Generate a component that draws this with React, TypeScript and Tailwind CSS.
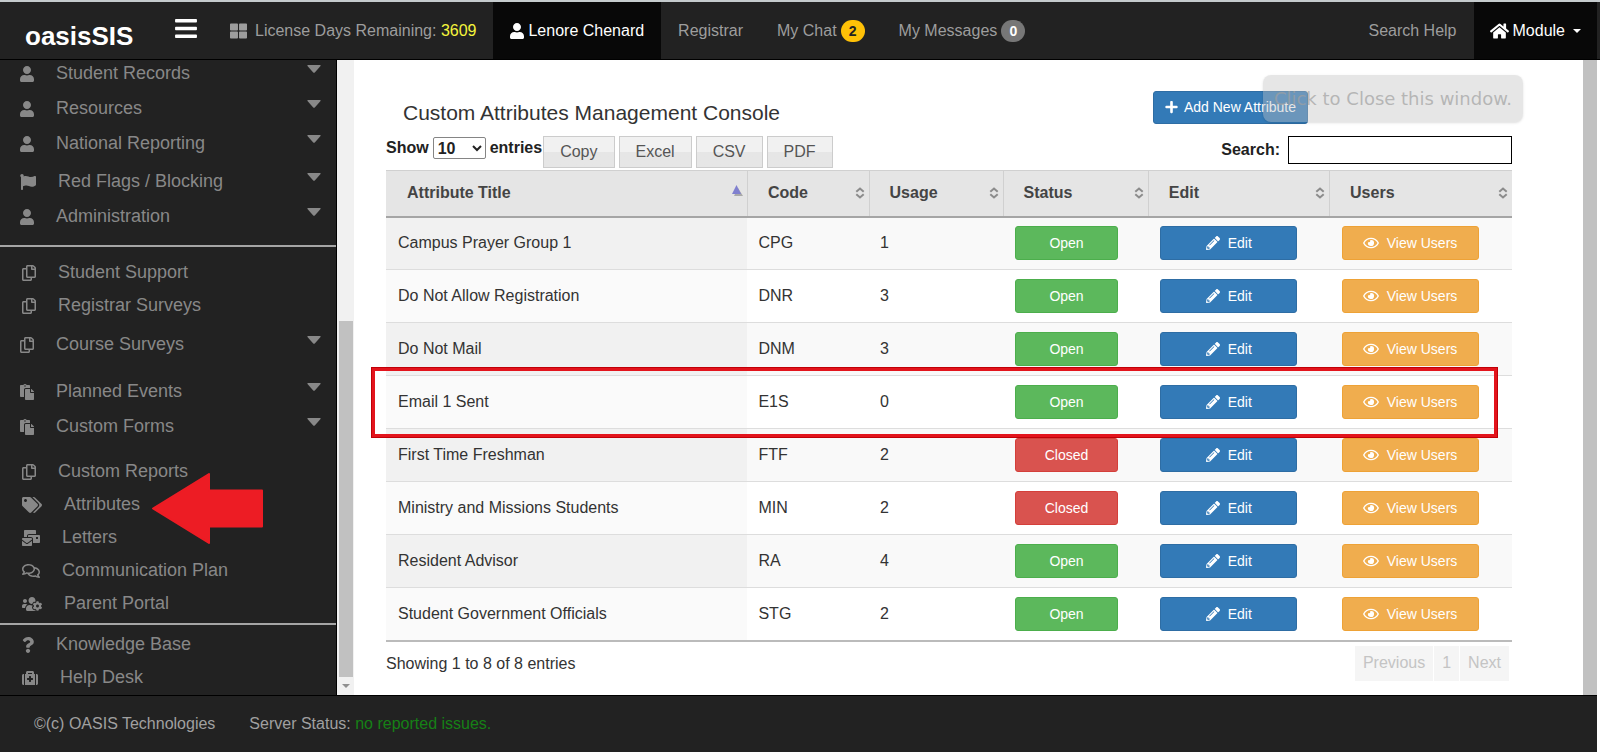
import type { ComponentType } from "react";
import {
  FaBars,
  FaFlag,
  FaHome,
  FaMailBulk,
  FaMedkit,
  FaPaste,
  FaPencilAlt,
  FaPlus,
  FaQuestion,
  FaRegComments,
  FaRegCopy,
  FaRegEye,
  FaTags,
  FaThLarge,
  FaUser,
  FaUsersCog,
} from "react-icons/fa";

type Icon = ComponentType<{ className?: string }>;

type MenuItem = { label: string; icon: Icon; size: string; menu?: boolean; pointer?: boolean };

const menuGroups: { className: string; items: MenuItem[] }[] = [
  {
    className: "gap-2",
    items: [
      { label: "Student Records", icon: FaUser, size: "w-[14px]", menu: true },
      { label: "Resources", icon: FaUser, size: "w-[14px]", menu: true },
      { label: "National Reporting", icon: FaUser, size: "w-[14px]", menu: true },
    ],
  },
  {
    className: "gap-2 pt-[11px] pb-[15px]",
    items: [
      { label: "Red Flags / Blocking", icon: FaFlag, size: "w-4", menu: true },
      { label: "Administration", icon: FaUser, size: "w-[14px]", menu: true },
    ],
  },
  {
    className: "gap-[6px] border-t-2 border-[#a5a5a5] pt-3",
    items: [
      { label: "Student Support", icon: FaRegCopy, size: "w-[14px]" },
      { label: "Registrar Surveys", icon: FaRegCopy, size: "w-[14px]" },
    ],
  },
  {
    className: "pt-3",
    items: [{ label: "Course Surveys", icon: FaRegCopy, size: "w-[14px]", menu: true }],
  },
  {
    className: "gap-2 pt-5",
    items: [
      { label: "Planned Events", icon: FaPaste, size: "w-[14px]", menu: true },
      { label: "Custom Forms", icon: FaPaste, size: "w-[14px]", menu: true },
    ],
  },
  {
    className: "gap-[6px] pt-[18px] pb-[6px]",
    items: [
      { label: "Custom Reports", icon: FaRegCopy, size: "w-[14px]" },
      { label: "Attributes", icon: FaTags, size: "w-5", pointer: true },
      { label: "Letters", icon: FaMailBulk, size: "w-[18px]" },
      { label: "Communication Plan", icon: FaRegComments, size: "w-[18px]" },
      { label: "Parent Portal", icon: FaUsersCog, size: "w-5" },
    ],
  },
  {
    className: "gap-[6px] border-t-2 border-[#a5a5a5] pt-[6px]",
    items: [
      { label: "Knowledge Base", icon: FaQuestion, size: "w-3" },
      { label: "Help Desk", icon: FaMedkit, size: "w-4" },
    ],
  },
];

const attributes = [
  { title: "Campus Prayer Group 1", code: "CPG", usage: 1, open: true },
  { title: "Do Not Allow Registration", code: "DNR", usage: 3, open: true },
  { title: "Do Not Mail", code: "DNM", usage: 3, open: true },
  { title: "Email 1 Sent", code: "E1S", usage: 0, open: true, marked: true },
  { title: "First Time Freshman", code: "FTF", usage: 2, open: false },
  { title: "Ministry and Missions Students", code: "MIN", usage: 2, open: false },
  { title: "Resident Advisor", code: "RA", usage: 4, open: true },
  { title: "Student Government Officials", code: "STG", usage: 2, open: true },
];

const columns = [
  { label: "Attribute Title", width: "w-[32.1%]", sorted: true },
  { label: "Code", width: "w-[10.8%]" },
  { label: "Usage", width: "w-[11.9%]" },
  { label: "Status", width: "w-[12.9%]" },
  { label: "Edit", width: "w-[16.1%]" },
  { label: "Users", width: "w-[16.2%]" },
];

function SortIcon({ sorted }: { sorted?: boolean }) {
  if (sorted) {
    return (
      <svg className="mb-1 h-3 w-3" viewBox="0 0 12 12">
        <path d="M7 3l5 8H3z" fill="#a9a9a9" />
        <path d="M5.5 0L10 9H1z" fill="#8080cf" />
      </svg>
    );
  }
  return (
    <svg className="h-3 w-[10px]" viewBox="0 0 10 12" fill="none" stroke="#8c8c8c" strokeWidth="2">
      <path d="M1.3 4.8L5 1.5l3.7 3.3M1.3 7.2L5 10.5l3.7-3.3" />
    </svg>
  );
}

function Header() {
  return (
    <header className="flex h-[60px] items-stretch border-t-2 border-b border-t-[#c5cbcd] border-b-black bg-[#222] pr-[3px] text-[#9d9d9d]">
      <a href="#" className="flex w-[149px] items-center pt-3 pl-[25px] text-[26px] font-bold text-white">
        oasisSIS
      </a>
      <button type="button" aria-label="Toggle menu" className="w-[64px] pb-1 pl-[26px] text-white">
        <FaBars className="h-[25px] w-[22px]" />
      </button>
      <div className="flex items-center gap-2 px-[17px]">
        <FaThLarge className="h-[18px] w-[17px]" />
        <span>
          License Days Remaining: <span className="text-[#f5f53c]">3609</span>
        </span>
      </div>
      <a href="#" className="flex items-center gap-1 bg-[#080808] px-[17px] text-white">
        <FaUser className="h-4 w-[14px]" />
        Lenore Chenard
      </a>
      <a href="#" className="flex items-center px-[17px]">
        Registrar
      </a>
      <a href="#" className="flex items-center gap-1 px-[17px]">
        My Chat
        <span className="flex h-[22px] w-6 items-center justify-center rounded-full bg-[#ffc107] text-sm font-bold text-[#222]">
          2
        </span>
      </a>
      <a href="#" className="flex items-center gap-1 px-[17px]">
        My Messages
        <span className="flex h-[22px] w-6 items-center justify-center rounded-full bg-[#777] text-sm font-bold text-white">
          0
        </span>
      </a>
      <a href="#" className="ml-auto flex items-center px-[17px]">
        Search Help
      </a>
      <button type="button" className="flex items-center gap-1 bg-[#080808] px-4 text-white">
        <FaHome className="h-[18px] w-[19px]" />
        Module
        <svg className="ml-1 h-1 w-2" viewBox="0 0 8 4" fill="currentColor">
          <path d="M0 0h8L4 4z" />
        </svg>
      </button>
    </header>
  );
}

function SidebarItem({ item }: { item: MenuItem }) {
  const ItemIcon = item.icon;
  return (
    <li className="relative">
      <a
        href="#"
        className={`flex h-[27px] items-center gap-[22px] pr-[15px] ${item.menu ? "pl-5" : "pl-[22px]"}`}
      >
        <ItemIcon className={`h-4 shrink-0 ${item.size}`} />
        {item.label}
        {item.menu && (
          <svg className="mt-[5px] ml-auto h-2 w-[14px] self-start" viewBox="0 0 14 8" fill="currentColor">
            <path d="M1 0h12q1.2 0 .5 1L8 7.300q-1 1-2 0L.5 1Q-.2 0 1 0z" />
          </svg>
        )}
      </a>
      {item.pointer && (
        <svg
          className="absolute -top-[18px] left-[152px] z-10 h-[71px] w-[111px]"
          viewBox="0 0 111 71"
          fill="#ed1c24"
          stroke="#ed1c24"
          strokeWidth="2"
          strokeLinejoin="round"
        >
          <path d="M1 35.500L57 1v16.500h53v36H57V70z" />
        </svg>
      )}
    </li>
  );
}

function Sidebar() {
  return (
    <aside className="flex w-[354px] shrink-0">
      <nav className="flex-1 border-r border-black bg-[#222] pb-1 text-lg leading-[27px] text-[#888]">
        {menuGroups.map((group, i) => (
          <ul key={i} className={`flex flex-col ${group.className}`}>
            {group.items.map((item) => (
              <SidebarItem key={item.label} item={item} />
            ))}
          </ul>
        ))}
      </nav>
      {/* Scrollbar */}
      <div className="flex w-[17px] flex-col items-center justify-end bg-[#f1f1f1]">
        <div className="h-[56%] w-[14px] bg-[#c1c1c1]" />
        <div className="flex h-[18px] items-center">
          <svg className="h-1 w-2" viewBox="0 0 8 4" fill="#8f8f8f">
            <path d="M0 0h8L4 4z" />
          </svg>
        </div>
      </div>
    </aside>
  );
}

function AttributesTable() {
  return (
    <table className="w-full table-fixed border-collapse border-b-2 border-[#bbb] text-left text-[#333]">
      <thead>
        <tr className="h-[46px] border-t border-b-2 border-t-[#d0d0d0] border-b-[#a5a5a5] bg-[#e5e5e5]">
          {columns.map((col) => (
            <th
              key={col.label}
              className={`border-l border-[#d0d0d0] pr-1 pl-5 text-[#444] first:border-l-0 first:pl-[21px] ${col.width}`}
            >
              <div className="flex items-center justify-between">
                {col.label}
                <SortIcon sorted={col.sorted} />
              </div>
            </th>
          ))}
        </tr>
      </thead>
      <tbody>
        {attributes.map((row) => (
          <tr
            key={row.code}
            className="group relative h-[53px] border-t border-[#ddd] first:border-t-0 odd:bg-[#f9f9f9]"
          >
            <td className="bg-[#fafafa] pl-3 group-odd:bg-[#f1f1f1]">
              {row.title}
              {row.marked && (
                <span className="pointer-events-none absolute -top-[10px] right-[14px] -bottom-[9px] -left-[15px] z-10 border-4 border-[#e3141c] outline -outline-offset-1 outline-[#c00008]" />
              )}
            </td>
            <td className="pl-[11px]">{row.code}</td>
            <td className="pl-[11px]">{row.usage}</td>
            <td className="pl-3">
              <button
                type="button"
                className={`h-[34px] w-[103px] rounded-[3px] border text-sm text-white ${
                  row.open ? "border-[#4cae4c] bg-[#5cb85c]" : "border-[#d43f3a] bg-[#d9534f]"
                }`}
              >
                {row.open ? "Open" : "Closed"}
              </button>
            </td>
            <td className="pl-3">
              <button
                type="button"
                className="flex h-[34px] w-[137px] items-center justify-center gap-2 rounded-[3px] border border-[#2e6da4] bg-[#337ab7] text-sm text-white"
              >
                <FaPencilAlt className="h-[14px] w-[14px]" />
                Edit
              </button>
            </td>
            <td className="pl-3">
              <button
                type="button"
                className="flex h-[34px] w-[137px] items-center justify-center gap-2 rounded-[3px] border border-[#eea236] bg-[#f0ad4e] text-sm text-white"
              >
                <FaRegEye className="h-[14px] w-4" />
                View Users
              </button>
            </td>
          </tr>
        ))}
      </tbody>
    </table>
  );
}

function Console() {
  return (
    <main className="relative flex-1 bg-white pt-[30px] pr-[71px] pl-8">
      <div className="flex items-center justify-between pl-[17px]">
        <h1 className="pt-3 text-[21px] leading-[22px] text-[#333]">Custom Attributes Management Console</h1>
        <button
          type="button"
          className="mr-[204px] flex h-[33px] items-center gap-[6px] rounded-[3px] border border-[#2e6da4] bg-[#337ab7] px-[11px] text-sm text-white"
        >
          <FaPlus className="h-[14px] w-[13px]" />
          Add New Attribute
        </button>
      </div>

      <div className="mt-3 flex h-[34px] items-start text-[#222]">
        <label className="flex items-center gap-1 font-bold">
          Show
          <select className="h-[22px] w-[53px] rounded-[2px] border border-[#858585] bg-white">
            <option>10</option>
          </select>
          entries
        </label>
        <div className="flex gap-1 pl-px">
          {["Copy", "Excel", "CSV", "PDF"].map((name) => (
            <button
              key={name}
              type="button"
              className="h-8 border border-[#ccc] bg-linear-to-b from-[#f1f1f1] from-50% to-[#e6e6e6] to-50% px-4 text-[#555]"
            >
              {name}
            </button>
          ))}
        </div>
        <label className="ml-auto flex items-center gap-2 font-bold">
          Search:
          <input type="search" className="h-7 w-56 border border-black bg-white px-1 font-normal" />
        </label>
      </div>

      <AttributesTable />

      <div className="flex items-start justify-between pt-1 pr-[3px] text-[#333]">
        <p className="pt-[6px]">Showing 1 to 8 of 8 entries</p>
        <div className="flex h-[35px] gap-px text-[#c4c4c4]">
          {["Previous", "1", "Next"].map((page) => (
            <button key={page} type="button" className="bg-[#f5f5f5] px-2" disabled>
              {page}
            </button>
          ))}
        </div>
      </div>

      <button
        type="button"
        className="absolute top-[15px] right-[60px] h-[47px] rounded-lg bg-[#c0c0c0]/40 px-[11px] font-['DejaVu_Sans',sans-serif] text-lg text-[#a0a0a0]/70 shadow-sm"
      >
        Click to Close this window.
      </button>
    </main>
  );
}

export default function App() {
  return (
    <div className="flex min-h-screen flex-col bg-white text-base font-['Liberation_Sans',Arial,sans-serif]">
      <Header />
      <div className="flex flex-1 pr-[3px]">
        <Sidebar />
        <Console />
        <div className="w-[14px] shrink-0 bg-[#c1c1c1]" />
      </div>
      <div className="pr-[3px]">
        <footer className="flex h-[57px] items-center gap-[34px] border-t border-black bg-[#222] pl-[34px] text-[#a0a0a0]">
          <span>©(c) OASIS Technologies</span>
          <span>
            Server Status: <span className="text-[#168016]">no reported issues.</span>
          </span>
        </footer>
      </div>
    </div>
  );
}
